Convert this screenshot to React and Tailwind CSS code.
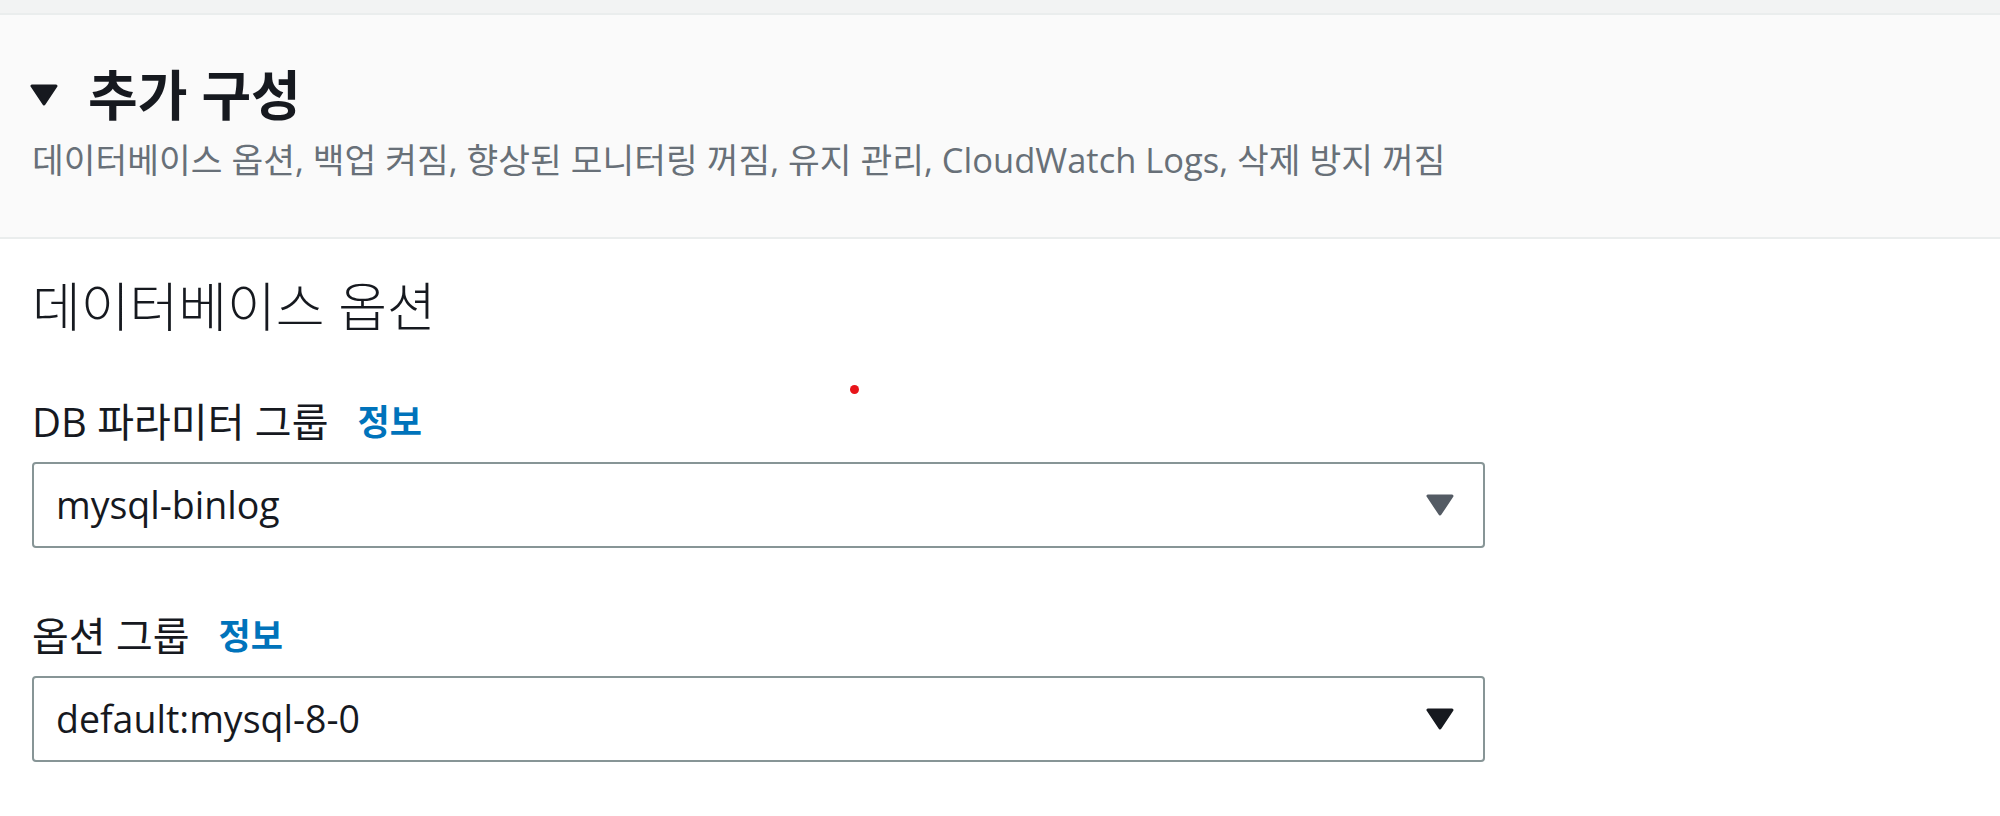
import React from 'react';

function Caret({ className }) {
  return (
    <svg viewBox="0 0 28 22" className={className} fill="currentColor">
      <polygon points="2,2 26,2 14,20" stroke="currentColor" strokeWidth="3" strokeLinejoin="round" />
    </svg>
  );
}

function SelectField({ label, value, caretColor }) {
  return (
    <div className="flex flex-col">
      <div className="flex items-center text-[40px] leading-[48px] text-[#16191f]">
        <span>{label}</span>
        <span className="ml-[29px] text-[35px] font-bold text-[#0073bb]">정보</span>
      </div>
      <div className="mt-[16px] flex h-[86px] w-[1453px] items-center justify-between rounded-[4px] border-2 border-[#879596] bg-white pl-[22px] pr-[29px]">
        <span className="text-[37.5px] text-[#16191f]">{value}</span>
        <Caret className={`h-[22px] w-[28px] ${caretColor}`} />
      </div>
    </div>
  );
}

export default function App() {
  return (
    <div className="relative h-[816px] w-full overflow-hidden bg-white font-['Open_Sans','Noto_Sans_CJK_KR',sans-serif]">
      {/* top strip */}
      <div className="h-[15px] border-b-2 border-[#eaeded] bg-[#f2f3f3]" />

      {/* expandable header */}
      <div className="h-[224px] border-b-2 border-[#eaeded] bg-[#fafafa] px-[30px] pt-[49px]">
        <div className="flex h-[62px] items-center">
          <Caret className="h-[22px] w-[28px] text-[#16191f]" />
          <h2 className="ml-[30px] text-[54px] font-bold leading-[62px] text-[#16191f]">추가 구성</h2>
        </div>
        <p className="mt-[12px] pl-[2px] text-[34.5px] leading-[44px] text-[#687078]">
          데이터베이스 옵션, 백업 켜짐, 향상된 모니터링 꺼짐, 유지 관리, CloudWatch Logs, 삭제 방지 꺼짐
        </p>
      </div>

      {/* database options */}
      <div className="px-[32px] pt-[37px]">
        <h3 className="text-[53px] font-light leading-[62px] text-[#16191f]">데이터베이스 옵션</h3>
        <div className="mt-[60px] flex flex-col gap-[64px]">
          <SelectField label="DB 파라미터 그룹" value="mysql-binlog" caretColor="text-[#545b64]" />
          <SelectField label="옵션 그룹" value="default:mysql-8-0" caretColor="text-[#16191f]" />
        </div>
      </div>

      {/* pointer marker */}
      <div className="absolute left-[850px] top-[385px] h-[9px] w-[9px] rounded-full bg-[#e8141a]" />
    </div>
  );
}
